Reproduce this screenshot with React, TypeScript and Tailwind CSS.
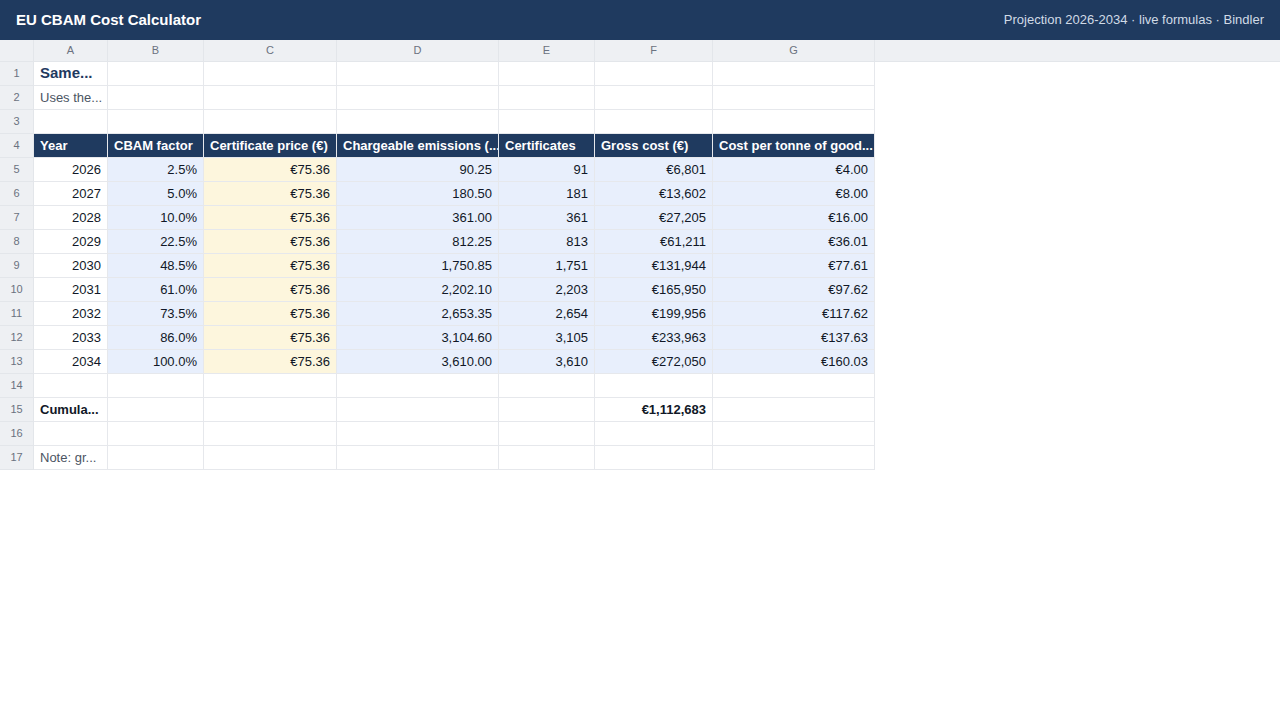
const cols = ["A", "B", "C", "D", "E", "F", "G"]
const widths = [74, 96, 133, 162, 96, 118, 162]

const headers = ["Year", "CBAM factor", "Certificate price (€)", "Chargeable emissions (...", "Certificates", "Gross cost (€)", "Cost per tonne of good..."]

const data = [
  ["2026", "2.5%", "€75.36", "90.25", "91", "€6,801", "€4.00"],
  ["2027", "5.0%", "€75.36", "180.50", "181", "€13,602", "€8.00"],
  ["2028", "10.0%", "€75.36", "361.00", "361", "€27,205", "€16.00"],
  ["2029", "22.5%", "€75.36", "812.25", "813", "€61,211", "€36.01"],
  ["2030", "48.5%", "€75.36", "1,750.85", "1,751", "€131,944", "€77.61"],
  ["2031", "61.0%", "€75.36", "2,202.10", "2,203", "€165,950", "€97.62"],
  ["2032", "73.5%", "€75.36", "2,653.35", "2,654", "€199,956", "€117.62"],
  ["2033", "86.0%", "€75.36", "3,104.60", "3,105", "€233,963", "€137.63"],
  ["2034", "100.0%", "€75.36", "3,610.00", "3,610", "€272,050", "€160.03"],
]

function RowNum({ n }: { n: number }) {
  return (
    <div className="w-[34px] shrink-0 h-full flex items-center justify-center bg-[#eef0f3] border-b border-r border-[#e3e6ea] text-[11px] text-[#6b7280]">
      {n}
    </div>
  )
}

function Cell({ w, children, className = "" }: { w: number; children?: React.ReactNode; className?: string }) {
  return (
    <div
      style={{ width: w }}
      className={`shrink-0 h-full px-[6px] flex items-center overflow-hidden whitespace-nowrap border-b border-r border-[#e6e8ec] ${className}`}
    >
      {children}
    </div>
  )
}

function EmptyRow({ n, first, firstClass = "" }: { n: number; first?: string; firstClass?: string }) {
  return (
    <div className="flex h-[24px]">
      <RowNum n={n} />
      {widths.map((w, i) => (
        <Cell key={i} w={w} className={i === 0 ? firstClass : ""}>
          {i === 0 ? first : null}
        </Cell>
      ))}
    </div>
  )
}

export default function App() {
  return (
    <div className="w-[1280px] h-[720px] bg-white text-[13px] text-[#111827]" style={{ fontFamily: '"Liberation Sans", Arial, sans-serif' }}>
      <div className="h-[40px] bg-[#1f3a5f] flex items-center justify-between px-4 text-white">
        <span className="text-[15px] font-bold">EU CBAM Cost Calculator</span>
        <span className="text-[13px] text-[#d1dae6]">Projection 2026-2034 · live formulas · Bindler</span>
      </div>
      <div className="flex h-[22px] bg-[#eef0f3] border-b border-[#e3e6ea]">
        <div className="w-[34px] shrink-0 border-r border-[#e3e6ea]" />
        {cols.map((c, i) => (
          <div key={c} style={{ width: widths[i] }} className="shrink-0 flex items-center justify-center text-[11px] text-[#6b7280] border-r border-[#e3e6ea]">
            {c}
          </div>
        ))}
      </div>
      <EmptyRow n={1} first="Same..." firstClass="text-[15px] font-bold text-[#1f3a5f]" />
      <EmptyRow n={2} first="Uses the..." firstClass="text-[#4b5563]" />
      <EmptyRow n={3} />
      <div className="flex h-[24px]">
        <RowNum n={4} />
        {headers.map((h, i) => (
          <Cell key={i} w={widths[i]} className="bg-[#1f3a5f] text-white font-bold border-[#4a6283]">
            {h}
          </Cell>
        ))}
      </div>
      {data.map((r, ri) => (
        <div key={ri} className="flex h-[24px]">
          <RowNum n={ri + 5} />
          {r.map((v, i) => (
            <Cell
              key={i}
              w={widths[i]}
              className={`justify-end ${i === 0 ? "bg-white" : i === 2 ? "bg-[#fdf6dd]" : "bg-[#e8effc]"}`}
            >
              {v}
            </Cell>
          ))}
        </div>
      ))}
      <EmptyRow n={14} />
      <div className="flex h-[24px]">
        <RowNum n={15} />
        {widths.map((w, i) => (
          <Cell key={i} w={w} className={`font-bold ${i === 5 ? "justify-end" : ""}`}>
            {i === 0 ? "Cumula..." : i === 5 ? "€1,112,683" : null}
          </Cell>
        ))}
      </div>
      <EmptyRow n={16} />
      <EmptyRow n={17} first="Note: gr..." firstClass="text-[#4b5563]" />
    </div>
  )
}
